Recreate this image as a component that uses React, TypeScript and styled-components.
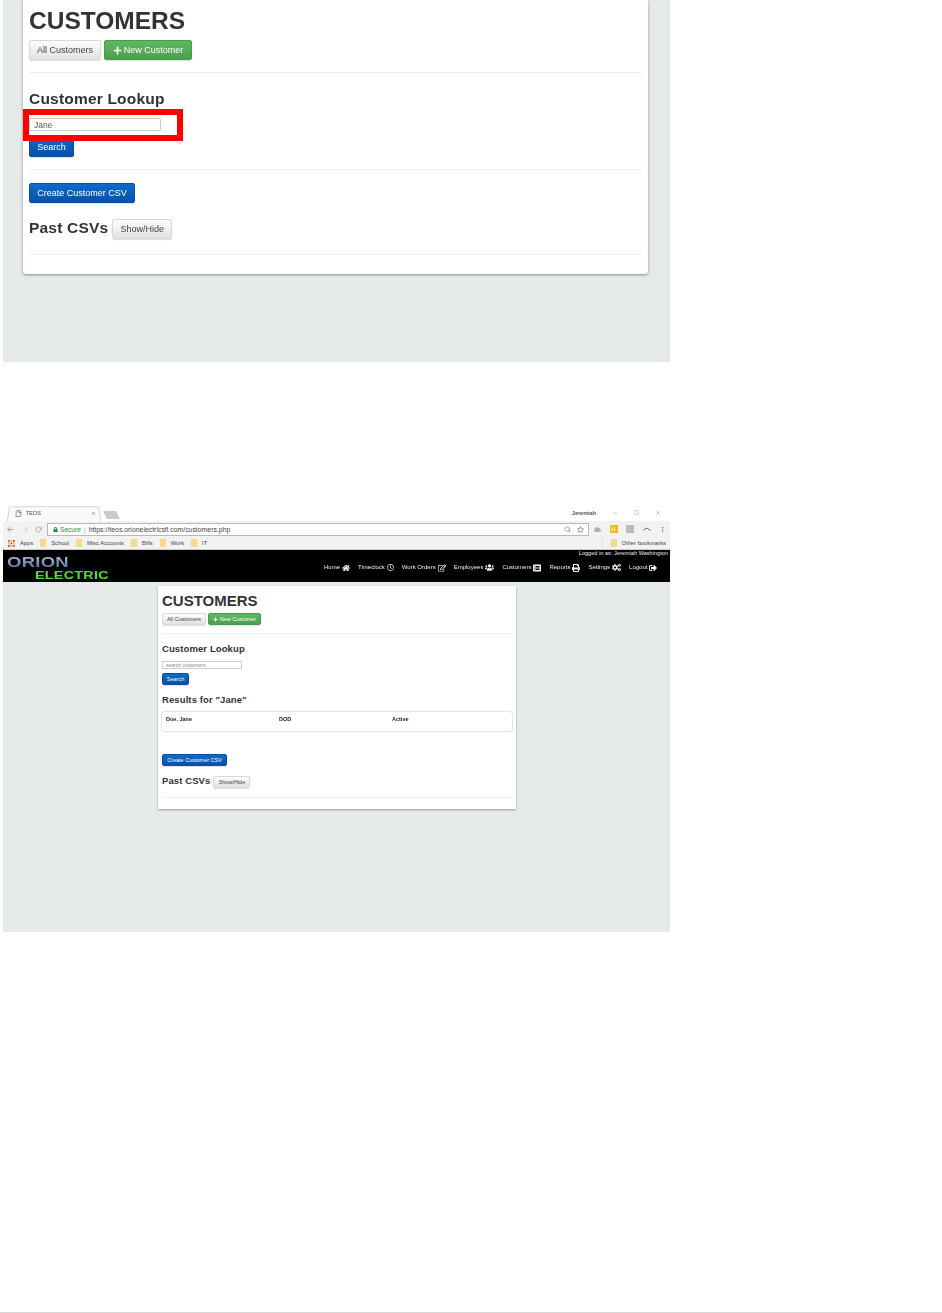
import * as React from "react"
import styled, { createGlobalStyle } from "styled-components";
import { FaHome, FaRegClock, FaRegEdit, FaUsers, FaPrint, FaCogs, FaSignOutAlt, FaListAlt, FaPlus, FaLock, FaRegStar, FaCloud } from "react-icons/fa";
import { FiArrowLeft, FiArrowRight, FiRotateCw, FiSearch, FiFile, FiX, FiMinus, FiSquare, FiMoreVertical } from "react-icons/fi";

const GlobalStyle = createGlobalStyle`
  html, body {
    margin: 0;
    padding: 0;
    background: #fff;
    font-family: "Liberation Sans", Arial, sans-serif;
    color: #333;
  }
`

const Page = styled.div`
  width: 942px;
  height: 1313px;
  box-sizing: border-box;
  overflow: hidden;
  border-bottom: 1px solid #d8d8d8;
`

const FirstShot = styled.section`
  margin-left: 3px;
  width: 667px;
  height: 362px;
  background: #e5e9e7;
  padding: 0 22px 0 20px;
  box-sizing: border-box;
  filter: blur(0.35px);
  position: relative;
`

const SecondShot = styled.section`
  margin: 138px 0 0 3px;
  width: 667px;
  height: 432px;
  background: #e5e9e7;
  display: flex;
  flex-direction: column;
  filter: blur(0.4px);
`

const BigCard = styled.div`
  height: 274px;
  background: #fff;
  border-radius: 0 0 3px 3px;
  box-shadow: 0 1px 3px rgba(0, 0, 0, 0.4);
  padding: 0 6px;
  box-sizing: border-box;
  display: flex;
  flex-direction: column;
`

const BigTitle = styled.h1`
  margin: 6px 0 0;
  font-size: 24.5px;
  line-height: 30px;
  font-weight: bold;
  color: #333;
`

const Row = styled.div<{ $gap: number; $top: number }>`
  display: flex;
  align-items: center;
  gap: ${p => p.$gap}px;
  margin-top: ${p => p.$top}px;
`

const Rule = styled.hr<{ $top: number }>`
  width: 100%;
  margin: ${p => p.$top}px 0 0;
  border: 0;
  border-top: 1px solid #eeeeee;
`

const Btn = styled.div<{ $kind: "plain" | "green" | "blue"; $w: number; $h: number; $size: number }>`
  width: ${p => p.$w}px;
  height: ${p => p.$h}px;
  box-sizing: border-box;
  display: flex;
  align-items: center;
  justify-content: center;
  gap: 2px;
  flex: none;
  font-size: ${p => p.$size}px;
  border-radius: 2px;
  border: 1px solid ${p => (p.$kind === "plain" ? "#d8d8d8" : p.$kind === "green" ? "#4a9a4a" : "#0a4f9e")};
  color: ${p => (p.$kind === "plain" ? "#444" : "#fff")};
  background: ${p =>
    p.$kind === "plain"
      ? "linear-gradient(#fdfdfd, #e2e2e2)"
      : p.$kind === "green"
      ? "linear-gradient(#62b862, #4c9f4c)"
      : "linear-gradient(#0a6ccb, #0a50a6)"};
  box-shadow: 0 1px 1px rgba(0, 0, 0, 0.12);
`

const BigHeading = styled.h2<{ $top: number }>`
  margin: ${p => p.$top}px 0 0;
  font-size: 15.5px;
  line-height: 18px;
  font-weight: bold;
  letter-spacing: 0.2px;
  color: #333;
`

const BigInput = styled.div`
  margin-top: 10px;
  width: 132px;
  height: 13px;
  box-sizing: border-box;
  border: 1px solid #ccc;
  border-radius: 2px;
  padding-left: 4px;
  font-size: 8.5px;
  line-height: 12px;
  color: #555;
`

// the red annotation drawn on top of the first screenshot
const RedMark = styled.div`
  position: absolute;
  left: 20px;
  top: 109px;
  width: 160px;
  height: 32px;
  box-sizing: border-box;
  border: 6px solid #fe0000;
`

const Browser = styled.div`
  height: 50px;
  background: #f2f2f2;
  flex: none;
  display: flex;
  flex-direction: column;
`

const TabStrip = styled.div`
  height: 21px;
  flex: none;
  background: #fff;
  display: flex;
  align-items: flex-end;
  padding: 0 9px 0 5px;
`

const Tab = styled.div`
  width: 92px;
  height: 15px;
  box-sizing: border-box;
  background: #fafafa;
  border: 1px solid #d4d4d4;
  border-bottom: 0;
  transform: perspective(40px) rotateX(8deg);
  display: flex;
  align-items: center;
  gap: 4px;
  padding: 0 3px 2px 6px;
  font-size: 5.5px;
  color: #444;
`

const TabLabel = styled.span`
  flex: 1;
`

const NewTab = styled.div`
  width: 13px;
  height: 8px;
  margin: 0 0 2px 5px;
  background: #c9cbcb;
  transform: skewX(25deg);
`

const UserArea = styled.div`
  margin-left: auto;
  margin-bottom: 5px;
  display: flex;
  align-items: center;
  gap: 16px;
  font-size: 5.5px;
  font-weight: bold;
  color: #555;
`

const WinIcons = styled.div`
  display: flex;
  gap: 16px;
  color: #999;
`

const AddressRow = styled.div`
  height: 16px;
  flex: none;
  display: flex;
  align-items: center;
  padding: 0 4px 0 3px;
  color: #888;
  gap: 6px;
`

const UrlBox = styled.div`
  width: 542px;
  height: 13px;
  flex: none;
  margin-left: -1px;
  box-sizing: border-box;
  border: 1px solid #b8b8b8;
  background: #fff;
  display: flex;
  align-items: center;
  padding: 0 4px 0 5px;
  font-size: 6.6px;
  gap: 2px;
`

const Secure = styled.span`
  color: #2a8a4a;
`

const Divider = styled.span`
  color: #999;
  margin: 0 1px;
`

const UrlMain = styled.span`
  font-size: 6.9px;
  color: #444;
`

const UrlTools = styled.div`
  margin-left: auto;
  display: flex;
  gap: 6px;
  color: #777;
`

const ExtIcons = styled.div`
  margin-left: -1px;
  display: flex;
  align-items: center;
  gap: 8.5px;
  color: #b0b0b0;
`

const Ext = styled.span<{ $color: string }>`
  width: 8px;
  height: 8px;
  background: ${p => p.$color};
  color: #fff3c4;
  font-size: 6px;
  font-weight: bold;
  line-height: 8px;
  text-align: center;
`

const BookmarkRow = styled.div`
  height: 13px;
  flex: none;
  display: flex;
  align-items: center;
  padding: 0 4px 0 5px;
  gap: 7px;
  font-size: 5.8px;
  color: #444;
  border-bottom: 1px solid #ccc;
  box-sizing: border-box;
`

const Bookmark = styled.span`
  display: flex;
  align-items: center;
  gap: 5px;
`

const Folder = styled.span`
  width: 6px;
  height: 8px;
  background: #f6d98a;
`

const Other = styled(Bookmark)`
  margin-left: auto;
  padding-left: 8px;
  border-left: 1px solid #ddd;
`

const NavBar = styled.div`
  height: 32px;
  flex: none;
  background: #000;
  display: flex;
  align-items: flex-start;
  justify-content: space-between;
  padding-left: 4px;
`

const Logo = styled.div`
  width: 105px;
  padding-top: 4px;
  font-weight: bold;
  display: flex;
  flex-direction: column;
`

const LogoTop = styled.span`
  font-size: 14px;
  line-height: 16px;
  letter-spacing: 0.2px;
  background: linear-gradient(#b4c6dc, #4b6a92);
  -webkit-background-clip: text;
  background-clip: text;
  color: transparent;
  transform: scaleX(1.32);
  transform-origin: left;
`

const LogoBottom = styled.span`
  font-size: 10px;
  line-height: 12px;
  margin-left: 28px;
  letter-spacing: 0.2px;
  color: #4fe02c;
  transform: scaleX(1.43);
  transform-origin: left;
`

const NavSide = styled.div`
  display: flex;
  flex-direction: column;
  align-items: flex-end;
  padding-right: 2px;
`

const LoggedIn = styled.div`
  font-size: 5.5px;
  line-height: 7px;
  color: #eee;
  letter-spacing: 0.05px;
`

const NavItems = styled.div`
  margin-top: 6px;
  padding-right: 11px;
  display: flex;
  gap: 8px;
  will-change: transform;
`

const NavItem = styled.span`
  display: flex;
  align-items: center;
  gap: 2px;
  font-size: 6px;
  line-height: 9px;
  color: #f2f2f2;
  white-space: nowrap;
`

const Content = styled.div`
  flex: 1;
  padding: 4px 0 0 155px;
`

const SmallCard = styled.div`
  width: 358px;
  height: 223px;
  box-sizing: border-box;
  background: #fff;
  box-shadow: 0 1px 2px rgba(0, 0, 0, 0.35);
  padding: 0 4px;
  display: flex;
  flex-direction: column;
`

const SmallTitle = styled.h1`
  margin: 6px 0 0;
  font-size: 15px;
  line-height: 18px;
  font-weight: bold;
  color: #333;
`

const SmallHeading = styled.h2<{ $top: number }>`
  margin: ${p => p.$top}px 0 0;
  font-size: 9.5px;
  line-height: 12px;
  font-weight: bold;
  letter-spacing: 0.1px;
  color: #333;
`

const SmallInput = styled.div`
  margin-top: 6px;
  width: 80px;
  height: 8px;
  box-sizing: border-box;
  border: 1px solid #ccc;
  padding-left: 3px;
  font-size: 5px;
  line-height: 6px;
  color: #888;
`

const ResultCard = styled.div`
  margin-top: 6px;
  height: 19px;
  border-radius: 2px;
  box-shadow: 0 0 2px rgba(0, 0, 0, 0.4);
  padding: 3px 4px 0;
  display: grid;
  grid-template-columns: 113px 113px 1fr;
  font-size: 5.5px;
  line-height: 8px;
  font-weight: bold;
  color: #222;
  box-sizing: border-box;
  will-change: transform;
`

const navLinks = [
    { label: "Home", icon: <FaHome size={8} /> },
    { label: "Timeclock", icon: <FaRegClock size={7} /> },
    { label: "Work Orders", icon: <FaRegEdit size={8} /> },
    { label: "Employees", icon: <FaUsers size={9} /> },
    { label: "Customers", icon: <FaListAlt size={8} /> },
    { label: "Reports", icon: <FaPrint size={8} /> },
    { label: "Settings", icon: <FaCogs size={9} /> },
    { label: "Logout", icon: <FaSignOutAlt size={8} /> },
]

const bookmarks = ["School", "Misc Accounts", "Bills", "Work", "IT"]

const AppsIcon = () => (
    <svg width="7" height="7" viewBox="0 0 7 7">
        {[0, 1, 2].map(r =>
            [0, 1, 2].map(c => (
                <rect key={`${r}${c}`} x={c * 2.5} y={r * 2.5} width="1.8" height="1.8" fill={(r + c) % 2 ? "#e6b93c" : "#d8503a"} />
            ))
        )}
    </svg>
)

const CurlIcon = () => (
    <svg width="8" height="6" viewBox="0 0 8 6" fill="none" stroke="#666" strokeWidth="1">
        <path d="M0.5 4.5 Q2.5 1 4.5 2.5 L7.5 4.5" />
    </svg>
)

const App = () => {
    return (
        <Page>
            <GlobalStyle />
            <FirstShot>
                <BigCard>
                    <BigTitle>CUSTOMERS</BigTitle>
                    <Row $gap={3} $top={4}>
                        <Btn $kind="plain" $w={72} $h={20} $size={9}>All Customers</Btn>
                        <Btn $kind="green" $w={88} $h={20} $size={9}><FaPlus size={9} />New Customer</Btn>
                    </Row>
                    <Rule $top={12} />
                    <BigHeading $top={17}>Customer Lookup</BigHeading>
                    <BigInput>Jane</BigInput>
                    <Row $gap={0} $top={6}>
                        <Btn $kind="blue" $w={45} $h={20} $size={9}>Search</Btn>
                    </Row>
                    <Rule $top={12} />
                    <Row $gap={0} $top={13}>
                        <Btn $kind="blue" $w={106} $h={20} $size={9}>Create Customer CSV</Btn>
                    </Row>
                    <Row $gap={4} $top={16}>
                        <BigHeading $top={-2}>Past CSVs</BigHeading>
                        <Btn $kind="plain" $w={60} $h={20} $size={9}>Show/Hide</Btn>
                    </Row>
                    <Rule $top={15} />
                </BigCard>
                <RedMark />
            </FirstShot>

            <SecondShot>
                <Browser>
                    <TabStrip>
                        <Tab>
                            <FiFile size={7} />
                            <TabLabel>TEOS</TabLabel>
                            <FiX size={5} />
                        </Tab>
                        <NewTab />
                        <UserArea>
                            Jeremiah
                            <WinIcons>
                                <FiMinus size={6} />
                                <FiSquare size={5} />
                                <FiX size={6} />
                            </WinIcons>
                        </UserArea>
                    </TabStrip>
                    <AddressRow>
                        <FiArrowLeft size={9} />
                        <FiArrowRight size={9} color="#ccc" />
                        <FiRotateCw size={7} />
                        <UrlBox>
                            <FaLock size={5} color="#2a8a4a" />
                            <Secure>Secure</Secure>
                            <Divider>|</Divider>
                            <UrlMain>https://teos.orionelectricsfl.com/customers.php</UrlMain>
                            <UrlTools>
                                <FiSearch size={7} />
                                <FaRegStar size={7} />
                            </UrlTools>
                        </UrlBox>
                        <ExtIcons>
                            <FaCloud size={7} />
                            <Ext $color="#eeb52e">H</Ext>
                            <Ext $color="#bbb" />
                            <CurlIcon />
                            <FiMoreVertical size={7} color="#666" />
                        </ExtIcons>
                    </AddressRow>
                    <BookmarkRow>
                        <Bookmark><AppsIcon />Apps</Bookmark>
                        {bookmarks.map(b => (
                            <Bookmark key={b}><Folder />{b}</Bookmark>
                        ))}
                        <Other><Folder />Other bookmarks</Other>
                    </BookmarkRow>
                </Browser>
                <NavBar>
                    <Logo>
                        <LogoTop>ORION</LogoTop>
                        <LogoBottom>ELECTRIC</LogoBottom>
                    </Logo>
                    <NavSide>
                        <LoggedIn>Logged in as: Jeremiah Washington</LoggedIn>
                        <NavItems>
                            {navLinks.map(n => (
                                <NavItem key={n.label}>{n.label}{n.icon}</NavItem>
                            ))}
                        </NavItems>
                    </NavSide>
                </NavBar>
                <Content>
                    <SmallCard>
                        <SmallTitle>CUSTOMERS</SmallTitle>
                        <Row $gap={2} $top={3}>
                            <Btn $kind="plain" $w={44} $h={12} $size={5.5}>All Customers</Btn>
                            <Btn $kind="green" $w={53} $h={12} $size={5.5}><FaPlus size={5} />New Customer</Btn>
                        </Row>
                        <Rule $top={8} />
                        <SmallHeading $top={9}>Customer Lookup</SmallHeading>
                        <SmallInput>search customers</SmallInput>
                        <Row $gap={0} $top={4}>
                            <Btn $kind="blue" $w={27} $h={12} $size={5.5}>Search</Btn>
                        </Row>
                        <SmallHeading $top={9}>Results for "Jane"</SmallHeading>
                        <ResultCard>
                            <span>Doe, Jane</span>
                            <span>DOD</span>
                            <span>Active</span>
                        </ResultCard>
                        <Row $gap={0} $top={23}>
                            <Btn $kind="blue" $w={65} $h={12} $size={5.5}>Create Customer CSV</Btn>
                        </Row>
                        <Row $gap={3} $top={10}>
                            <SmallHeading $top={-2}>Past CSVs</SmallHeading>
                            <Btn $kind="plain" $w={37} $h={12} $size={5.5}>Show/Hide</Btn>
                        </Row>
                        <Rule $top={9} />
                    </SmallCard>
                </Content>
            </SecondShot>
        </Page>
    )
}

export default App
